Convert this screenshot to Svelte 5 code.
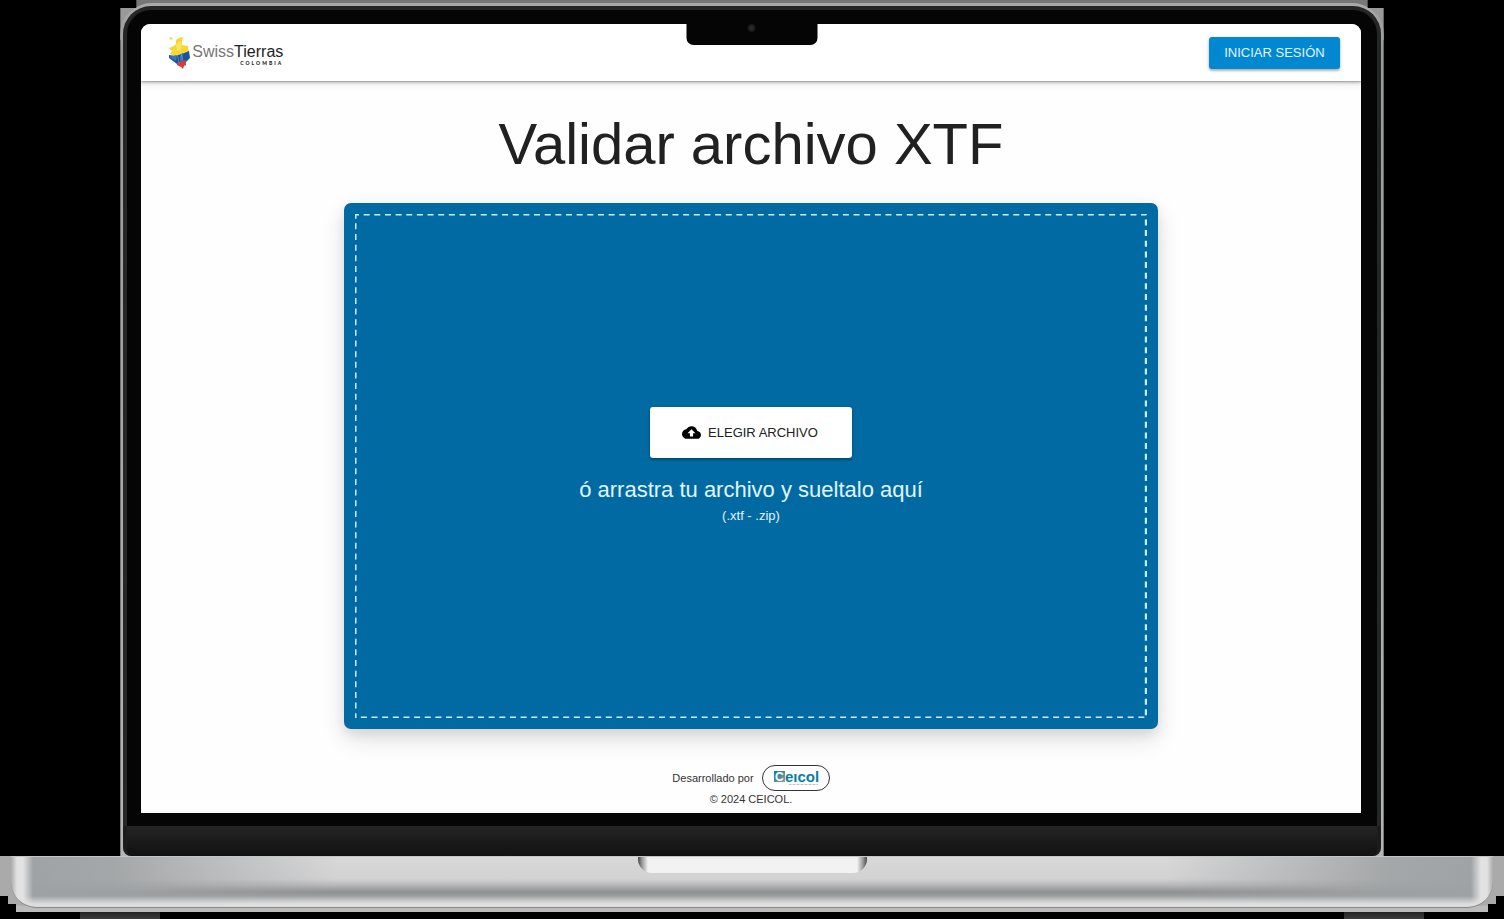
<script>
  let fileName = $state('');
  let dragging = $state(false);
  let input;

  function pick(event) {
    fileName = event.currentTarget.files?.[0]?.name ?? '';
  }

  function drop(event) {
    event.preventDefault();
    dragging = false;
    fileName = event.dataTransfer?.files?.[0]?.name ?? '';
  }

  function over(event) {
    event.preventDefault();
    dragging = true;
  }
</script>

<div class="laptop">
  <div class="halo">
    <div class="lid">
      <div class="bezel">
        <div class="screen">
          <header>
            <a class="brand" href="#inicio">
              <svg width="23" height="33" viewBox="0 0 23 33" aria-hidden="true">
                <path d="M2 1l3 1-1 2-3-1z" fill="#f6d977" />
                <path d="M1 12l5-2 2-2 0-4 3-2 4-1-1 4 0 4 6 1 1 7-11 4L2 18l2-3z" fill="#f8d62c" />
                <path d="M8 8l5-3 1 5-4 6-2-5z" fill="#fbe45b" />
                <path d="M1 19l6 1 7-2 7-3 1 7-4 4-5 1-4 1-8-6z" fill="#16559d" />
                <path d="M4 20l5-1-1 6-7-4zM12 18l3-1-1 8-2 1z" fill="#3976b3" />
                <path d="M9 27l9-3v5l-2 1-1 3-2-2-4-2z" fill="#d83a42" />
                <path d="M6 13l4 8 1 6M12 12l3 13" fill="none" stroke="#fff" stroke-width=".5" opacity=".5" />
              </svg>
              <span class="wordmark">
                <span class="name">Swiss<b>Tierras</b></span>
                <span class="country">COLOMBIA</span>
              </span>
            </a>
            <button class="login" type="button">INICIAR SESIÓN</button>
          </header>

          <main>
            <h1>Validar archivo XTF</h1>
            <section class="card">
              <div
                class="drop"
                class:dragging
                role="group"
                aria-labelledby="hint"
                ondragover={over}
                ondragleave={() => (dragging = false)}
                ondrop={drop}
              >
                <svg class="dashes" aria-hidden="true">
                  <rect width="100%" height="100%" />
                </svg>
                <button class="choose" type="button" onclick={() => input.click()}>
                  <svg width="19" height="19" viewBox="0 0 24 24" aria-hidden="true">
                    <path fill="#000" d="M19.35 10.04C18.67 6.59 15.64 4 12 4 9.11 4 6.6 5.64 5.35 8.04 2.34 8.36 0 10.91 0 14c0 3.31 2.69 6 6 6h13c2.760 0 5-2.240 5-5 0-2.640-2.050-4.780-4.650-4.960zM14 13v4h-4v-4H7l5-5 5 5h-3z" />
                  </svg>
                  ELEGIR ARCHIVO
                </button>
                <input bind:this={input} type="file" accept=".xtf,.zip" aria-labelledby="hint" hidden onchange={pick} />
                <p class="hint" id="hint">{fileName || 'ó arrastra tu archivo y sueltalo aquí'}</p>
                <p class="types">(.xtf - .zip)</p>
              </div>
            </section>
          </main>

          <footer>
            <div class="credit">
              <span>Desarrollado por</span>
              <a class="pill" href="#ceicol">
                <svg width="46" height="18" viewBox="0 0 46 18">
                  <defs>
                    <linearGradient id="mark" x1="0" y1="0" x2="1" y2="1">
                      <stop offset="0" stop-color="#087f9f" />
                      <stop offset=".5" stop-color="#4d8c9d" />
                      <stop offset="1" stop-color="#999" />
                    </linearGradient>
                  </defs>
                  <path d="M1 2h11v11H1z" fill="url(#mark)" />
                  <text x="2" y="12" class="initial">C</text>
                  <text x="12" y="13" class="letters">eıcol</text>
                  <path d="M16 15.500h29" stroke="#888" stroke-width="1" stroke-dasharray="2 .5 1 .5" opacity=".5" />
                </svg>
              </a>
            </div>
            <p>© 2024 CEICOL.</p>
          </footer>
        </div>
        <div class="notch"><i></i></div>
      </div>
      <div class="chin"></div>
    </div>
  </div>
  <div class="base">
    <div class="deck"><div class="groove"></div></div>
  </div>
  <div class="feet"><i></i><i></i></div>
</div>

<style>
  :global(body) {
    background: #000;
  }
  * {
    box-sizing: border-box;
  }
  .laptop {
    display: flex;
    flex-direction: column;
    min-height: 100vh;
    overflow: hidden;
    background: #000;
    color: #212121;
    font-family: 'Liberation Sans', Arial, sans-serif;
  }
  .halo {
    display: flex;
    flex: 1;
    width: 84%;
    margin: 0 auto;
    padding-top: 3px;
    background: linear-gradient(#777 0 8px, #999 8px 40px, #000 40px);
    clip-path: polygon(16px 0, calc(100% - 16px) 0, calc(100% - 16px) 8px, 100% 8px, 100% 100%, 0 100%, 0 8px, 16px 8px);
  }
  .lid {
    display: flex;
    flex: 1;
    flex-direction: column;
    padding: 3px 3px 0;
    border-radius: 32px 32px 0 0;
    background: linear-gradient(#aaa, #999 50px, #b5b5b3);
  }
  .bezel {
    position: relative;
    display: flex;
    flex: 1;
    padding: 14px 16px 13px 14px;
    border: 4px solid #252626;
    border-bottom: 0;
    border-radius: 28px 28px 0 0;
    background: #050505;
  }
  .screen {
    display: flex;
    flex: 1;
    flex-direction: column;
    overflow: hidden;
    border-radius: 9px 9px 0 0;
    background: #fefefe;
  }
  .notch {
    position: absolute;
    top: 0;
    left: 50%;
    display: flex;
    justify-content: center;
    width: 131px;
    height: 35px;
    padding-top: 14px;
    transform: translateX(-50%);
    border-radius: 0 0 7px 7px;
    background: #050505;
  }
  .notch i {
    width: 8px;
    height: 8px;
    border-radius: 50%;
    background: radial-gradient(#303030, #151515 70%);
  }
  .chin {
    height: 30px;
    border: solid #1c1c1c;
    border-width: 0 4px;
    border-radius: 0 0 8px 8px;
    background: linear-gradient(#252525, #111);
  }
  header {
    display: flex;
    align-items: center;
    justify-content: space-between;
    height: 57px;
    padding: 0 21px 0 27px;
    background: #fff;
    box-shadow: 0 2px 3px rgba(0, 0, 0, 0.2), 0 1px 1px rgba(0, 0, 0, 0.15), 0 3px 9px rgba(0, 0, 0, 0.08);
  }
  .brand {
    display: flex;
    align-items: center;
    gap: 1px;
    color: #222;
    text-decoration: none;
  }
  .wordmark {
    display: flex;
    flex-direction: column;
    align-items: flex-end;
    padding-top: 5px;
  }
  .name {
    color: #777;
    font-size: 16px;
    line-height: 16px;
  }
  .name b {
    color: #222;
    font-weight: 400;
  }
  .country {
    font: 900 5px/6px Lato, sans-serif;
    letter-spacing: 2px;
  }
  button {
    display: flex;
    align-items: center;
    justify-content: center;
    border: 0;
    border-radius: 3px;
    font-family: inherit;
    font-size: 13px;
    cursor: pointer;
    box-shadow: 0 2px 2px rgba(0, 0, 0, 0.2), 0 1px 4px rgba(0, 0, 0, 0.18);
  }
  .login {
    height: 32px;
    padding: 0 15px;
    background: #0288d1;
    color: #e1f5fe;
  }
  main {
    display: flex;
    flex: 1;
    flex-direction: column;
    align-items: center;
    padding-top: 28px;
  }
  h1 {
    margin: 0 0 24px;
    font-size: 58px;
    font-weight: 400;
    line-height: 70px;
  }
  .card {
    display: flex;
    flex: 1;
    width: 66.7%;
    padding: 11px;
    border-radius: 7px;
    background: #026aa3;
    box-shadow: 0 10px 24px rgba(0, 0, 0, 0.12), 0 5px 12px rgba(0, 0, 0, 0.08);
  }
  .drop {
    position: relative;
    display: flex;
    flex: 1;
    flex-direction: column;
    align-items: center;
    justify-content: center;
    color: #e1f5fe;
  }
  .dashes {
    position: absolute;
    inset: 0;
    width: 100%;
    height: 100%;
    pointer-events: none;
  }
  .dashes rect {
    fill: none;
    stroke: #c9effc;
    stroke-width: 3px;
    stroke-dasharray: 6 4.65;
    stroke-dashoffset: 2;
  }
  .dragging {
    background: #0277bd;
  }
  .choose {
    gap: 7px;
    height: 51px;
    padding: 0 34px 0 32px;
    background: #fff;
    color: #212121;
  }
  p {
    margin: 0;
  }
  .hint {
    padding-top: 18px;
    font-size: 22px;
    line-height: 28px;
  }
  .types {
    padding-top: 2px;
    font-size: 13px;
    line-height: 20px;
  }
  footer {
    display: flex;
    flex-direction: column;
    align-items: center;
    padding: 36px 0 6px;
    color: #333;
    font-size: 11px;
    line-height: 16px;
  }
  .credit {
    display: flex;
    align-items: center;
    gap: 8px;
  }
  .pill {
    display: flex;
    align-items: center;
    justify-content: center;
    width: 68px;
    height: 26px;
    border: 1px solid #333;
    border-radius: 13px;
    background: #fff;
  }
  .initial {
    fill: #fff;
    font: 700 12px 'Liberation Sans', sans-serif;
  }
  .letters {
    fill: #087f9f;
    font: 700 15px 'Liberation Sans', sans-serif;
  }
  .base {
    height: 56px;
    background: linear-gradient(#aaa 49px, #bbb 50px);
    clip-path: polygon(0 0, 100% 0, 100% 40px, calc(100% - 8px) 40px, calc(100% - 8px) 48px, calc(100% - 16px) 48px, calc(100% - 16px) 100%, 16px 100%, 16px 48px, 8px 48px, 8px 40px, 0 40px);
  }
  .deck {
    display: flex;
    justify-content: center;
    height: 52px;
    margin: 0 11px;
    border-top: 1px solid #c5c5c5;
    border-bottom: 1px solid #888;
    border-radius: 0 0 26px 26px;
    background:
      linear-gradient(90deg, #aaa, #e2e2e2 6px 12px, transparent 22px calc(100% - 22px), #e2e2e2 calc(100% - 12px) calc(100% - 6px), #aaa),
      linear-gradient(transparent 39px, rgba(235, 235, 235, 0.8) 47px, #ddd),
      linear-gradient(90deg, #9fa2a4, rgba(159, 162, 164, 0.9) 7%, transparent 22% 78%, rgba(159, 162, 164, 0.9) 93%, #9fa2a4),
      linear-gradient(#d8d8d8 0, #d2d2d3 22px, #b8b8ba 28px, #8f9092 35px, #a0a1a3 40px, #b8b8b8);
  }
  .groove {
    width: 229px;
    height: 16px;
    border-radius: 0 0 14px 14px;
    background: linear-gradient(90deg, #444, #999 4px, #f2f2f2 10px calc(100% - 10px), #999 calc(100% - 4px), #444);
  }
  .feet {
    display: flex;
    justify-content: space-between;
    padding: 0 80px;
  }
  .feet i {
    width: 80px;
    height: 7px;
    background: linear-gradient(#222, #3c3c3c);
  }
</style>
